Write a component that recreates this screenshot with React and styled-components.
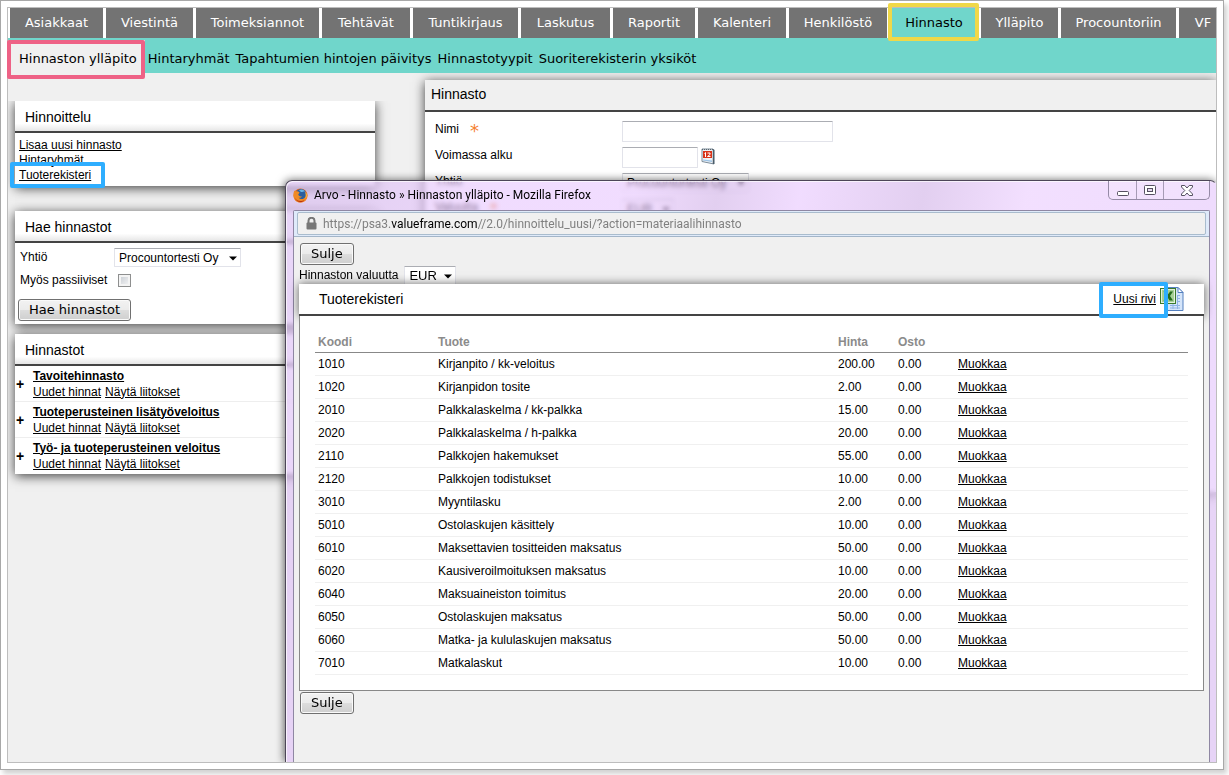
import { useState } from "react";
import styled, { createGlobalStyle, css } from "styled-components";

const GlobalStyle = createGlobalStyle`
  * {
    box-sizing: border-box;
  }
  body {
    margin: 0;
    background: #fff;
    color: #000;
    font-family: "Liberation Sans", Arial, sans-serif;
    font-size: 12px;
    line-height: 15px;
  }
  a {
    color: inherit;
  }
`;

const verdana = css`
  font-family: "DejaVu Sans", Verdana, sans-serif;
  font-size: 13px;
`;

const highlight = css`
  position: relative;
  &::after {
    content: "";
    position: absolute;
    border: 4px solid;
    border-radius: 2px;
    pointer-events: none;
  }
`;

const Frame = styled.div`
  display: flex;
  min-height: calc(100vh - 5px);
  margin: 0 5px 5px 0;
  padding: 6px;
  border: 1px solid #a8a8a8;
  box-shadow: 3px 4px 5px #d2d2d2;
`;
const Browser = styled.div`
  flex: 1;
  min-width: 0;
  display: flex;
  flex-direction: column;
  border: 1px solid #bdbdbd;
`;

const Header = styled.header`
  position: relative;
  z-index: 1;
`;
const MainNav = styled.nav`
  display: flex;
  gap: 3px;
  padding-left: 2px;
  overflow-x: clip;
`;
const MainTab = styled.a`
  ${verdana}
  flex: none;
  width: ${({ $width }) => $width}px;
  line-height: 30px;
  color: #fff;
  background: #737373;
  text-align: center;
  text-decoration: none;
  white-space: nowrap;
  ${({ $active }) =>
    $active &&
    css`
      ${highlight}
      color: #000;
      background: #70d6cb;
      &::after {
        inset: -5px -1px -3px -2px;
        border-color: #f0d848;
      }
    `}
`;
const SubNav = styled.nav`
  display: flex;
  gap: 6px;
  height: 35px;
  background: #70d6cb;
`;
const SubTab = styled.a`
  ${verdana}
  line-height: 41px;
  color: #000;
  text-decoration: none;
  white-space: nowrap;
  ${({ $active }) =>
    $active &&
    css`
      ${highlight}
      height: 39px;
      margin: 2px -3px 0 0;
      padding: 0 8px 0 11px;
      line-height: 37px;
      background: #f0f0f0;
      &::after {
        inset: 0 0 0 -1px;
        border-color: #ee6286;
      }
    `}
`;

const Stage = styled.main`
  flex: 1;
  position: relative;
  display: flex;
  align-items: flex-start;
  gap: 50px;
  padding: 7px 0 0 7px;
  overflow: clip;
  background: #f0f0f0;
`;
const Sidebar = styled.aside`
  flex: none;
  width: 360px;
  margin-top: 21px;
`;
const Panel = styled.section`
  margin-bottom: ${({ $gap }) => $gap || 10}px;
  background: #fff;
  box-shadow: 0 2px 11px rgba(0, 0, 0, 0.75);
  ${({ $flatTop }) => $flatTop && "clip-path: inset(0 -20px -20px -20px);"}
`;
const PanelTitle = styled.h2`
  height: 32px;
  margin: 0;
  padding: 0 10px;
  border-bottom: 2px solid #444;
  font-size: 14px;
  font-weight: normal;
  line-height: 32px;
  background: linear-gradient(#fff 75%, #e6e6e6);
`;
const LinkList = styled.ul`
  margin: 0;
  padding: 5px 4px 3px;
  list-style: none;
`;
const MarkedLink = styled.a`
  ${highlight}
  &::after {
    inset: -6px -14px -6px -9px;
    border-color: #2eaeff;
  }
`;

const SearchForm = styled.form`
  padding: 5px 3px 3px;
`;
const SearchRow = styled.div`
  display: flex;
  align-items: center;
  height: ${({ $tall }) => ($tall ? 27 : 19)}px;
  padding-left: 2px;
`;
const SearchLabel = styled.label`
  width: 94px;
  white-space: nowrap;
`;
const SearchActions = styled.div`
  padding-top: 5px;
`;
const CheckBox = styled.input`
  appearance: none;
  width: 13px;
  height: 13px;
  margin: 0 0 0 4px;
  border: 1px solid #8e8f8f;
  background: linear-gradient(135deg, #c4c9d0, #f8f8f8);
  box-shadow: inset 0 0 0 2px #f4f4f4;
  &:checked {
    background: #3c6ea8;
  }
`;
const Button = styled.button`
  ${verdana}
  display: block;
  height: 22px;
  padding: 0 10px;
  border: 1px solid #707070;
  border-radius: 3px;
  line-height: 20px;
  color: #000;
  background: linear-gradient(#f2f2f2, #ebebeb 50%, #dddddd 50%, #cfcfcf);
  box-shadow: inset 0 0 0 1px #fafafa;
`;

const SelectBox = styled.span`
  position: relative;
  display: inline-block;
  width: ${({ $width }) => $width}px;
  svg {
    position: absolute;
    right: 4px;
    top: 8px;
    pointer-events: none;
  }
`;
const NativeSelect = styled.select`
  appearance: none;
  display: block;
  width: 100%;
  height: 19px;
  padding: 0 4px;
  border: 1px solid #e2e3ea;
  border-top-color: #abadb3;
  border-radius: 1px;
  font: ${({ $size }) => $size || 12}px "Liberation Sans", Arial, sans-serif;
  color: #000;
  background: #fff;
`;

const PriceItem = styled.div`
  display: flex;
  align-items: center;
  height: 36px;
  line-height: 16px;
  border-bottom: 1px solid #eee;
  &:last-child {
    border-color: #fff;
  }
`;
const Expand = styled.button`
  width: 18px;
  padding: 0;
  border: none;
  font: bold 14px "Liberation Sans", Arial, sans-serif;
  text-align: left;
  text-indent: 1px;
  color: #000;
  background: transparent;
`;
const PriceName = styled.a`
  display: block;
  font-weight: bold;
`;
const PriceLinks = styled.div`
  display: flex;
  gap: 4px;
`;

const Editor = styled(Panel)`
  flex: 1;
  min-width: 0;
  min-height: 412px;
`;
const EditorTitle = styled(PanelTitle)`
  padding: 0 6px;
  line-height: 29px;
  background: #f0f0f0;
`;
const EditorRows = styled.div`
  display: grid;
  grid-template-columns: 187px 1fr;
  grid-auto-rows: 26px;
  padding: 6px 10px;
`;
const EditorLabel = styled.label`
  padding-top: 4px;
`;
const EditorField = styled.div`
  display: flex;
  gap: 3px;
  align-items: flex-start;
  padding-top: 3px;
`;
const TextInput = styled.input`
  width: ${({ $width }) => $width}px;
  height: 21px;
  padding: 0 3px;
  border: 1px solid #e2e3ea;
  border-top-color: #abadb3;
  border-radius: 1px;
  font: inherit;
`;
const Required = styled.span`
  margin-left: 11px;
  font: 18px/10px "DejaVu Sans", sans-serif;
  vertical-align: -4px;
  color: #f5812f;
`;

const Popup = styled.div`
  position: absolute;
  top: 107px;
  right: -1px;
  bottom: 0;
  left: 277px;
  display: flex;
  flex-direction: column;
  padding: 0 6px 0 7px;
  border: 1px solid #4d4658;
  border-width: 1px 1px 0;
  border-radius: 7px 7px 0 0;
  border-right-color: transparent;
  background: linear-gradient(
    100deg,
    rgba(216, 185, 242, 0.6) 0%,
    rgba(231, 197, 254, 0.6) 20%,
    rgba(231, 197, 254, 0.6) 34%,
    rgba(207, 175, 230, 0.6) 42%,
    rgba(231, 197, 254, 0.6) 50%,
    rgba(207, 175, 230, 0.6) 62%,
    rgba(234, 202, 254, 0.6) 72%,
    rgba(224, 192, 250, 0.6) 100%
  );
  backdrop-filter: blur(2px);
  box-shadow: inset 1px 1px 0 rgba(255, 255, 255, 0.7),
    -1px 0 9px rgba(0, 0, 0, 0.6);
`;
const TitleBar = styled.div`
  display: flex;
  align-items: flex-start;
  height: 29px;
`;
const WindowTitle = styled.h1`
  display: flex;
  align-items: center;
  gap: 6px;
  flex: 1;
  min-width: 0;
  height: 28px;
  margin: 0;
  font: 12px Roboto, "Segoe UI", sans-serif;
  white-space: nowrap;
`;
const WindowButtons = styled.div`
  display: flex;
  border: 1px solid #958aa6;
  border-top: none;
  border-radius: 0 0 5px 5px;
  background: rgba(255, 255, 255, 0.15);
`;
const WindowButton = styled.button`
  display: grid;
  place-items: center;
  width: ${({ $wide }) => ($wide ? 46 : 27)}px;
  height: 18px;
  padding: 0;
  border: none;
  background: transparent;
  & + & {
    border-left: 1px solid #a69bb5;
  }
`;
const PopupBody = styled.div`
  flex: 1;
  border: 1px solid #8f87a3;
  border-bottom: none;
  border-radius: 2px 2px 0 0;
  background: #f0f0f0;
`;
const AddressBar = styled.div`
  padding: 1px 3px;
  border-bottom: 1px solid #a3b5c8;
  background: #dfeafa;
`;
const Address = styled.div`
  display: flex;
  align-items: center;
  gap: 6px;
  height: 23px;
  padding-left: 8px;
  border: 1px solid #a9bccd;
  border-radius: 2px;
  font: 12px Roboto, "Segoe UI", sans-serif;
  color: #808080;
  background: #f0f0f0;
  b {
    font-weight: normal;
    color: #000;
  }
`;
const PopupContent = styled.div`
  padding: 5px 5px 20px;
  & > ${Button} {
    margin: 1px;
  }
`;
const CurrencyRow = styled.div`
  display: flex;
  align-items: center;
  gap: 6px;
  height: 18px;
`;
const Register = styled.section`
  position: relative;
  background: #fff;
`;
const RegisterHeader = styled.div`
  display: flex;
  align-items: center;
  height: 32px;
  padding: 0 20px;
  border-bottom: 2px solid #444;
  background: #fff;
  box-shadow: 0 0 9px rgba(0, 0, 0, 0.6);
`;
const RegisterTitle = styled.h2`
  flex: 1;
  margin: 0;
  font-size: 14px;
  font-weight: normal;
`;
const NewRow = styled.a`
  ${highlight}
  z-index: 1;
  margin-right: 4px;
  &::after {
    inset: -10px -12px -11px -14px;
    border-color: #2eaeff;
  }
`;
const RegisterBody = styled.div`
  position: relative;
  padding: 15px;
  border: 1px solid #888;
  border-top: none;
  background: #fff;
`;
const ProductTable = styled.table`
  width: 100%;
  table-layout: fixed;
  border-collapse: collapse;
  th,
  td {
    padding: 2px 3px 0;
    text-align: left;
  }
  th {
    height: 21px;
    border-bottom: 1px solid #888;
    color: #8b8b8b;
  }
  td {
    height: 23px;
    border-bottom: 1px solid #f0f0f0;
  }
`;

const priceLists = [
  "Tavoitehinnasto",
  "Tuoteperusteinen lisätyöveloitus",
  "Työ- ja tuoteperusteinen veloitus",
];

const mainTabs = [
  ["Asiakkaat", 93],
  ["Viestintä", 87],
  ["Toimeksiannot", 123],
  ["Tehtävät", 88],
  ["Tuntikirjaus", 105],
  ["Laskutus", 89],
  ["Raportit", 82],
  ["Kalenteri", 88],
  ["Henkilöstö", 98],
  ["Hinnasto", 88],
  ["Ylläpito", 77],
  ["Procountoriin", 115],
  ["VF", 48],
];

const subTabs = [
  "Hinnaston ylläpito",
  "Hintaryhmät",
  "Tapahtumien hintojen päivitys",
  "Hinnastotyypit",
  "Suoriterekisterin yksiköt",
];

const products = [
  ["1010", "Kirjanpito / kk-veloitus", "200.00"],
  ["1020", "Kirjanpidon tosite", "2.00"],
  ["2010", "Palkkalaskelma / kk-palkka", "15.00"],
  ["2020", "Palkkalaskelma / h-palkka", "20.00"],
  ["2110", "Palkkojen hakemukset", "55.00"],
  ["2120", "Palkkojen todistukset", "10.00"],
  ["3010", "Myyntilasku", "2.00"],
  ["5010", "Ostolaskujen käsittely", "10.00"],
  ["6010", "Maksettavien tositteiden maksatus", "50.00"],
  ["6020", "Kausiveroilmoituksen maksatus", "10.00"],
  ["6040", "Maksuaineiston toimitus", "20.00"],
  ["6050", "Ostolaskujen maksatus", "50.00"],
  ["6060", "Matka- ja kululaskujen maksatus", "50.00"],
  ["7010", "Matkalaskut", "10.00"],
];

const Select = ({ id, width, size, options }) => (
  <SelectBox $width={width}>
    <NativeSelect id={id} $size={size}>
      {options.map((option) => (
        <option key={option}>{option}</option>
      ))}
    </NativeSelect>
    <svg width="8" height="5" viewBox="0 0 8 5">
      <path d="M0 0.5H8L4 4.5Z" fill="#000" />
    </svg>
  </SelectBox>
);

const FirefoxIcon = () => (
  <svg width="15" height="15" viewBox="0 0 15 15">
    <circle cx="7.5" cy="7.5" r="7" fill="#e2641b" />
    <circle cx="8" cy="6.4" r="5.4" fill="#2a5f9e" />
    <path d="M6 2.2C8 .8 11 1.5 12 3.6 10.500 3 9.500 4.500 8 4Z" fill="#69b4e4" />
    <path
      d="M1.300 2.500C2 3.200 3 3 4.200 3.300 5.400 3.200 6 4 6.600 4.800L5.300 6.200C5.500 8 7 8.800 9 8.200 8.200 9.800 6.800 10 5.600 9.700 7.500 12 11.500 11.500 12.600 8.300 13 6.500 12.800 5 12 3.300 14.500 5 15 8.500 13.600 11 10.500 16.500 1.800 15.500.700 9 .300 6.500.600 4.300 1.300 2.500Z"
      fill="#f08a24"
    />
    <path
      d="M1.500 9C3 13 8 14.500 12 11.500 9.500 15.500 3 15 1.500 9Z"
      fill="#b93212"
    />
    <path d="M12.300 4C14 6 14 8.500 12.600 10.500 13 8 13 6 12.300 4Z" fill="#fbd04a" />
  </svg>
);

const LockIcon = () => (
  <svg width="11" height="13" viewBox="0 0 11 13">
    <path d="M2.500 6V3.800a3 3 0 0 1 6 0V6" fill="none" stroke="#777" strokeWidth="2" />
    <rect x="0.500" y="5.500" width="10" height="7" rx="1" fill="#777" />
  </svg>
);

const CalendarIcon = () => (
  <svg width="14" height="18" viewBox="0 -1 14 18">
    <path d="M1 1H12L13 2V16L1 13.500Z" fill="#eef2f6" stroke="#7b8b98" />
    <path d="M12.500 1.500V16" stroke="#4c5d6a" strokeWidth="1.500" />
    <path d="M1 1.500H12" stroke="#59656e" strokeDasharray="1 1" />
    <rect x="2" y="3" width="9" height="7" fill="#d9341a" />
    <path
      d="M3.500 5.500L4.500 4.500V9M6.500 5H9V6.500L6.500 8.500H9.500"
      fill="none"
      stroke="#fff"
    />
    <path d="M2 11.500L11 12.500V14L2 12.500Z" fill="#9cc3e6" />
  </svg>
);

const ExcelIcon = () => (
  <svg width="24" height="24" viewBox="0 0 24 24">
    <path d="M7.500 0.500H18L23 5.500V23.500H7.500Z" fill="#d5e5fa" stroke="#5580c0" />
    <path d="M18 0.500V5.500H23Z" fill="#fff" stroke="#5580c0" />
    <path
      d="M17 8.500H20M17 11.500H20M17 14.500H20M10 18.500H20M10 21H20M13 17V22M17.500 8V22"
      stroke="#8fb3e4"
    />
    <rect x="0.500" y="1.500" width="15" height="15" fill="#e4f0dc" stroke="#3b7a2c" />
    <rect x="2" y="3" width="12" height="12" fill="#a5cf96" />
    <path d="M3.500 4.500H7L8.500 7 10 4.500H13L10 9 13 13.500H9.500L8 11 6.500 13.500H3.500L6.500 9Z" fill="#256b1b" />
  </svg>
);

const MinimizeIcon = () => (
  <svg width="12" height="14" viewBox="0 0 12 14">
    <rect x="0.500" y="8.500" width="11" height="4" rx="1" fill="#fff" stroke="#555061" />
  </svg>
);

const MaximizeIcon = () => (
  <svg width="12" height="10" viewBox="0 0 12 10">
    <rect x="0.500" y="0.500" width="11" height="9" rx="1" fill="#fff" stroke="#555061" />
    <rect x="3.500" y="3.500" width="5" height="3" fill="#e5d8f0" stroke="#555061" />
  </svg>
);

const CloseIcon = () => (
  <svg width="12" height="11" viewBox="0 0 12 11">
    <path
      d="M0.500 0.500H3.800L6 3 8.200.500H11.500V2L8.200 5.500 11.500 9V10.500H8.200L6 8 3.800 10.500H.500V9L3.800 5.500.500 2Z"
      fill="#fff"
      stroke="#555061"
    />
  </svg>
);

const SideBar = () => {
  const [passive, setPassive] = useState(false);

  return (
    <Sidebar>
      <Panel $gap={25} $flatTop>
        <PanelTitle>Hinnoittelu</PanelTitle>
        <LinkList>
          <li>
            <a href="#uusi">Lisaa uusi hinnasto</a>
          </li>
          <li>
            <a href="#ryhmat">Hintaryhmät</a>
          </li>
          <li>
            <MarkedLink href="#tuoterekisteri">Tuoterekisteri</MarkedLink>
          </li>
        </LinkList>
      </Panel>
      <Panel>
        <PanelTitle>Hae hinnastot</PanelTitle>
        <SearchForm onSubmit={(e) => e.preventDefault()}>
          <SearchRow>
            <SearchLabel htmlFor="haku-yhtio">Yhtiö</SearchLabel>
            <Select id="haku-yhtio" width={127} options={["Procountortesti Oy"]} />
          </SearchRow>
          <SearchRow $tall>
            <SearchLabel htmlFor="passiiviset">Myös passiiviset</SearchLabel>
            <CheckBox
              id="passiiviset"
              type="checkbox"
              checked={passive}
              onChange={() => setPassive(!passive)}
            />
          </SearchRow>
          <SearchActions>
            <Button>Hae hinnastot</Button>
          </SearchActions>
        </SearchForm>
      </Panel>
      <Panel>
        <PanelTitle>Hinnastot</PanelTitle>
        {priceLists.map((name) => (
          <PriceItem key={name}>
            <Expand aria-label={`Avaa ${name}`}>+</Expand>
            <div>
              <PriceName href="#hinnasto">{name}</PriceName>
              <PriceLinks>
                <a href="#hinnat">Uudet hinnat</a>
                <a href="#liitokset">Näytä liitokset</a>
              </PriceLinks>
            </div>
          </PriceItem>
        ))}
      </Panel>
    </Sidebar>
  );
};

const PriceListEditor = () => (
  <Editor>
    <EditorTitle>Hinnasto</EditorTitle>
    <EditorRows>
      <EditorLabel htmlFor="nimi">
        Nimi<Required>*</Required>
      </EditorLabel>
      <EditorField>
        <TextInput id="nimi" $width={211} />
      </EditorField>
      <EditorLabel htmlFor="alku">Voimassa alku</EditorLabel>
      <EditorField>
        <TextInput id="alku" $width={76} />
        <CalendarIcon />
      </EditorField>
      <EditorLabel htmlFor="yhtio">Yhtiö</EditorLabel>
      <EditorField>
        <Select id="yhtio" width={127} options={["Procountortesti Oy"]} />
      </EditorField>
      <EditorLabel htmlFor="valuutta">
        Valuutta<Required>*</Required>
      </EditorLabel>
      <EditorField>
        <Select id="valuutta" width={52} options={["EUR"]} />
      </EditorField>
    </EditorRows>
  </Editor>
);

const ProductWindow = () => (
  <Popup>
    <TitleBar>
      <WindowTitle>
        <FirefoxIcon />
        Arvo - Hinnasto » Hinnaston ylläpito - Mozilla Firefox
      </WindowTitle>
      <WindowButtons>
        <WindowButton aria-label="Pienennä">
          <MinimizeIcon />
        </WindowButton>
        <WindowButton aria-label="Suurenna">
          <MaximizeIcon />
        </WindowButton>
        <WindowButton aria-label="Sulje ikkuna" $wide>
          <CloseIcon />
        </WindowButton>
      </WindowButtons>
    </TitleBar>
    <PopupBody>
      <AddressBar>
        <Address>
          <LockIcon />
          <span>
            https://psa3.<b>valueframe.com</b>
            //2.0/hinnoittelu_uusi/?action=materiaalihinnasto
          </span>
        </Address>
      </AddressBar>
      <PopupContent>
        <Button>Sulje</Button>
        <CurrencyRow>
          <label htmlFor="hinnaston-valuutta">Hinnaston valuutta</label>
          <Select id="hinnaston-valuutta" width={52} size={13} options={["EUR"]} />
        </CurrencyRow>
        <Register>
          <RegisterHeader>
            <RegisterTitle>Tuoterekisteri</RegisterTitle>
            <NewRow href="#uusi-rivi">Uusi rivi</NewRow>
            <ExcelIcon />
          </RegisterHeader>
          <RegisterBody>
            <ProductTable>
              <colgroup>
                <col width="120" />
                <col width="400" />
                <col width="60" />
                <col width="60" />
                <col />
              </colgroup>
              <thead>
                <tr>
                  <th>Koodi</th>
                  <th>Tuote</th>
                  <th>Hinta</th>
                  <th>Osto</th>
                  <th />
                </tr>
              </thead>
              <tbody>
                {products.map(([code, name, price]) => (
                  <tr key={code}>
                    <td>{code}</td>
                    <td>{name}</td>
                    <td>{price}</td>
                    <td>0.00</td>
                    <td>
                      <a href={`#muokkaa-${code}`}>Muokkaa</a>
                    </td>
                  </tr>
                ))}
              </tbody>
            </ProductTable>
          </RegisterBody>
        </Register>
        <Button>Sulje</Button>
      </PopupContent>
    </PopupBody>
  </Popup>
);

export default function App() {
  return (
    <>
      <GlobalStyle />
      <Frame>
        <Browser>
          <Header>
            <MainNav>
              {mainTabs.map(([tab, width]) => (
                <MainTab
                  key={tab}
                  href="#"
                  $width={width}
                  $active={tab === "Hinnasto"}
                >
                  {tab}
                </MainTab>
              ))}
            </MainNav>
            <SubNav>
              {subTabs.map((tab, index) => (
                <SubTab key={tab} href="#" $active={index === 0}>
                  {tab}
                </SubTab>
              ))}
            </SubNav>
          </Header>
          <Stage>
            <SideBar />
            <PriceListEditor />
            <ProductWindow />
          </Stage>
        </Browser>
      </Frame>
    </>
  );
}
